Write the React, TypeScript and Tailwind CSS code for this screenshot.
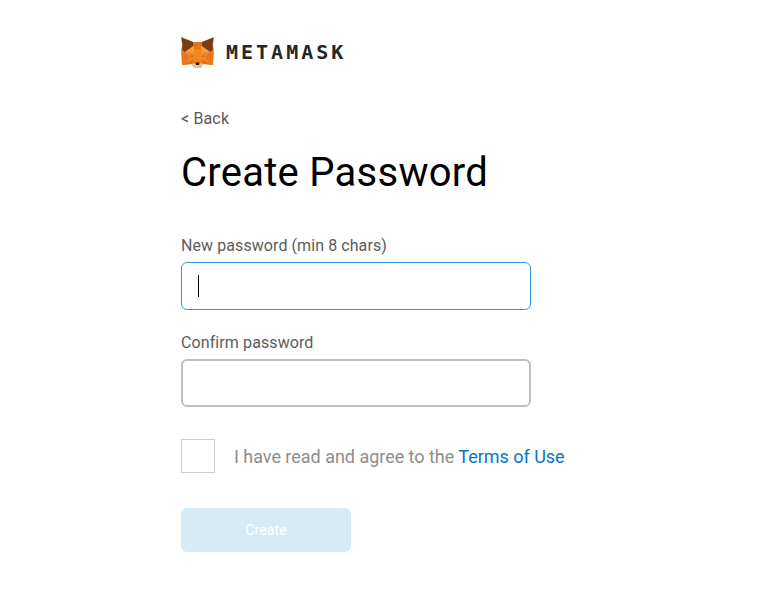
import React from "react";

function Fox() {
  return (
    <svg width="33" height="31" viewBox="0 0 33 31" className="block shrink-0">
      <polygon points="0,0 12,5 21,5 33,0 32,8 33,15 32,28 22,27 20.5,30.5 12.5,30.5 11,27 1,28 0,15 1,8" fill="#f6851b" />
      <polygon points="0.5,0.5 12,5 13,8.5 4,15 1,13 1.5,8" fill="#763d16" />
      <polygon points="32.5,0.5 21,5 20,8.5 29,15 32,13 31.5,8" fill="#763d16" />
      <polygon points="12,5 21,5 20,12 13,12" fill="#e2761b" />
      <polygon points="4,15 13,8.5 13,20 9,15.5" fill="#f89d35" />
      <polygon points="29,15 20,8.5 20,20 24,15.5" fill="#f89d35" />
      <polygon points="13,12 20,12 20.5,22 12.5,22" fill="#f6851b" />
      <polygon points="1,16 4,15 9,21 1,28" fill="#e4761b" />
      <polygon points="32,16 29,15 24,21 32,28" fill="#e4761b" />
      <polygon points="8,18 12,16 12.5,19 10,20" fill="#d08a50" />
      <polygon points="25,18 21,16 20.5,19 23,20" fill="#d08a50" />
      <polygon points="9.5,19 12,18.4 12.2,19.2 10.5,19.8" fill="#8a5a3a" />
      <polygon points="23.5,19 21,18.4 20.8,19.2 22.5,19.8" fill="#8a5a3a" />
      <polygon points="9,24 12.5,22 12.5,27 11,27 1,28" fill="#e0701a" />
      <polygon points="24,24 20.5,22 20.5,27 22,27 32,28" fill="#e0701a" />
      <polygon points="11,26.5 22,26.5 20.5,30.5 12.5,30.5" fill="#d7c1b3" />
      <polygon points="14.5,25.5 18.5,25.5 18,28 15,28" fill="#161616" />
    </svg>
  );
}

export default function App() {
  return (
    <div className="min-h-[602px] w-full bg-white pl-[181px] pt-[37px] font-['Roboto',sans-serif]">
      <div className="flex h-[30px] items-center gap-[12px]">
        <Fox />
        <span className="font-['DejaVu_Sans_Mono',monospace] text-[20px] font-bold leading-none tracking-[3px] text-[#24272a]">METAMASK</span>
      </div>
      <div className="mt-[41px] text-[16px] leading-[22px] tracking-[0.15px] text-[#5a5a5a]">&lt; Back</div>
      <h1 className="mt-[19px] text-[40px] font-normal leading-[47px] tracking-[0.27px] text-black">Create Password</h1>
      <label className="mt-[40px] block text-[16px] leading-[19px] tracking-[0.08px] text-[#5b5b5b]">New password (min 8 chars)</label>
      <div className="mt-[7px] flex h-[48px] w-[350px] items-center rounded-[6px] border border-[#3498db] pl-[16px]">
        <div className="h-[22px] w-px bg-black" />
      </div>
      <label className="mt-[23px] block text-[16px] leading-[19px] tracking-[0.1px] text-[#5b5b5b]">Confirm password</label>
      <div className="mt-[7px] h-[48px] w-[350px] rounded-[6px] border-2 border-[#bbc0c5]" />
      <div className="mt-[32px] flex items-center gap-[19px]">
        <div className="h-[34px] w-[34px] border border-[#cfcfcf]" />
        <p className="text-[18px] leading-[21px] tracking-[-0.025px] text-[#8d8d8d]">
          I have read and agree to the <span className="text-[#0376c9]">Terms of Use</span>
        </p>
      </div>
      <button className="mt-[35px] flex h-[44px] w-[170px] items-center justify-center rounded-[6px] bg-[#d6eaf8] text-[14px] tracking-[0.1px] text-white">
        Create
      </button>
    </div>
  );
}
